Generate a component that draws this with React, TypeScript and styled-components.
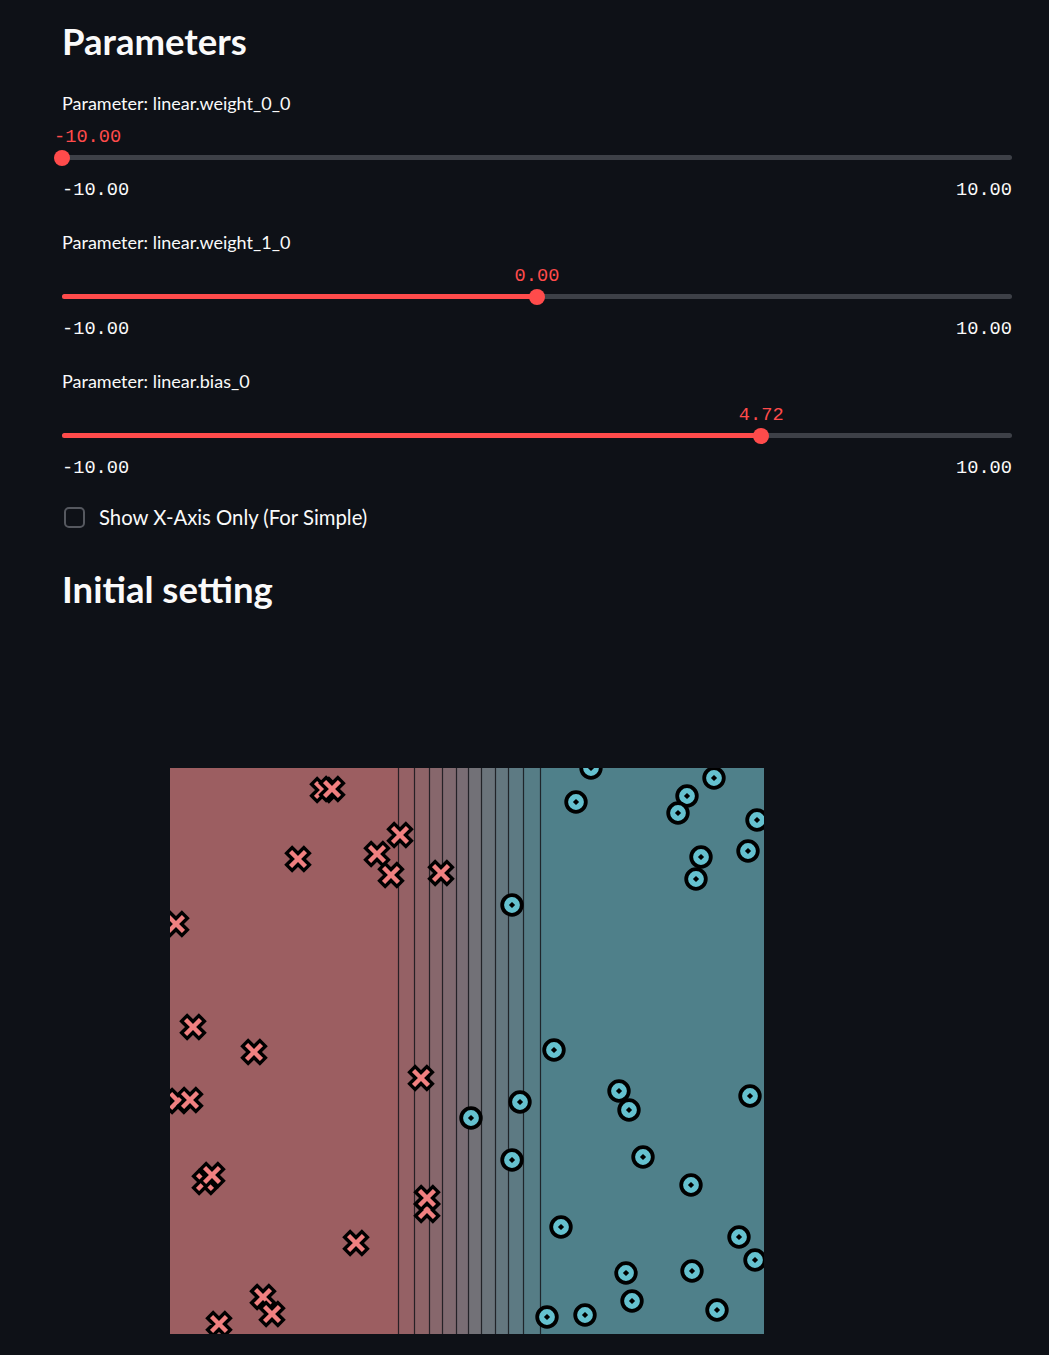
import React from "react";
import styled, { createGlobalStyle } from "styled-components";

const GlobalStyle = createGlobalStyle`
  html, body {
    margin: 0;
    padding: 0;
    background: #0e1117;
  }
  body {
    font-family: Lato, "Noto Sans", sans-serif;
    color: #fafafa;
    -webkit-font-smoothing: antialiased;
  }
`;

const Page = styled.main`
  width: 950px;
  padding: 0 0 0 62px;
  display: flex;
  flex-direction: column;
`;

const Heading = styled.h2<{ $top: number }>`
  margin: ${(p) => p.$top}px 0 0;
  font-size: 36.5px;
  font-weight: 700;
  line-height: 43px;
  color: #fafafa;
`;

const SliderBlock = styled.section<{ $top: number }>`
  display: flex;
  flex-direction: column;
  margin-top: ${(p) => p.$top}px;
`;

const SliderLabel = styled.div`
  font-size: 18px;
  line-height: 24px;
  height: 24px;
  color: #fafafa;
`;

const TrackArea = styled.div`
  height: 56px;
  box-sizing: border-box;
  padding-top: 40px;
`;

const Rail = styled.div`
  position: relative;
  height: 5px;
  border-radius: 3px;
  background: #3d4047;
`;

const Fill = styled.div`
  height: 100%;
  border-radius: 3px;
  background: #ff4b4b;
`;

const Thumb = styled.div`
  position: absolute;
  top: 50%;
  width: 16px;
  height: 16px;
  margin: -8px 0 0 -8px;
  border-radius: 50%;
  background: #ff4b4b;
`;

const Mono = styled.div`
  font-family: "Liberation Mono", "DejaVu Sans Mono", monospace;
  font-size: 18.67px;
  line-height: 20px;
  white-space: nowrap;
`;

const ValueLabel = styled(Mono)<{ $atMin: boolean }>`
  position: absolute;
  bottom: 13px;
  color: #ff4b4b;
  transform: ${(p) => (p.$atMin ? "translateX(-8px)" : "translateX(-50%)")};
`;

const MinMax = styled(Mono)`
  display: flex;
  justify-content: space-between;
  margin-top: 9px;
  color: #fafafa;
`;

const CheckRow = styled.label`
  display: flex;
  align-items: center;
  gap: 14px;
  margin-top: 28px;
  height: 22px;
  font-size: 20.3px;
  line-height: 22px;
  color: #fafafa;
`;

const Box = styled.span`
  display: block;
  width: 21px;
  height: 21px;
  margin-left: 2px;
  box-sizing: border-box;
  border: 2px solid #55585f;
  border-radius: 5px;
`;

const Chart = styled.svg`
  display: block;
  margin-top: 29px;
  overflow: visible;
`;

type SliderProps = { name: string; value: number; min: number; max: number };

function Slider({ name, value, min, max, top }: SliderProps & { top: number }) {
  const pct = ((value - min) / (max - min)) * 100;
  return (
    <SliderBlock $top={top}>
      <SliderLabel>Parameter: {name}</SliderLabel>
      <TrackArea>
        <Rail>
          <Fill style={{ width: `${pct}%` }} />
          <Thumb style={{ left: `${pct}%` }} />
          <ValueLabel $atMin={pct === 0} style={{ left: `${pct}%` }}>
            {value.toFixed(2)}
          </ValueLabel>
        </Rail>
      </TrackArea>
      <MinMax>
        <span>{min.toFixed(2)}</span>
        <span>{max.toFixed(2)}</span>
      </MinMax>
    </SliderBlock>
  );
}

const AX = { x0: 170, x1: 764, y0: 768, y1: 1334 };
const LINES = [398, 414, 429, 442, 456, 468, 481, 495, 508, 523, 540];
const RED = [156, 94, 97];
const TEAL = [79, 128, 138];

function mix(t: number) {
  const c = RED.map((r, i) => Math.round(r + (TEAL[i] - r) * t));
  return `rgb(${c[0]},${c[1]},${c[2]})`;
}

const CROSSES: [number, number][] = [
  [323, 790], [332, 789], [298, 859], [400, 835], [377, 854], [391, 875],
  [441, 873], [176, 924], [193, 1027], [254, 1052], [178, 1101], [190, 1100],
  [421, 1078], [205, 1182], [212, 1175], [427, 1210], [427, 1198], [356, 1243],
  [263, 1297], [272, 1314], [219, 1324],
];

const CIRCLES: [number, number][] = [
  [591, 768], [576, 802], [714, 778], [687, 796], [678, 813], [757, 820],
  [701, 857], [748, 851], [696, 879], [512, 905], [554, 1050], [520, 1102],
  [471, 1118], [619, 1091], [629, 1110], [750, 1096], [512, 1160], [643, 1157],
  [691, 1185], [561, 1227], [739, 1237], [755, 1260], [626, 1273], [692, 1271],
  [632, 1301], [717, 1310], [547, 1317], [585, 1315],
];

const L = 12.2;
const H = 3.9;
const CROSS_PTS = [
  [-H, -L], [H, -L], [H, -H], [L, -H], [L, H], [H, H],
  [H, L], [-H, L], [-H, H], [-L, H], [-L, -H], [-H, -H],
]
  .map(([x, y]) => `${x},${y}`)
  .join(" ");

function DecisionChart() {
  const edges = [AX.x0, ...LINES, AX.x1];
  const bands = edges.slice(0, -1).map((x, i) => ({
    x,
    w: edges[i + 1] - x,
    fill: mix(i / (edges.length - 2)),
  }));
  return (
    <Chart width={950} height={715} viewBox="62 640 950 715">
      <defs>
        <clipPath id="axes-clip">
          <rect x={AX.x0} y={AX.y0} width={AX.x1 - AX.x0} height={AX.y1 - AX.y0} />
        </clipPath>
      </defs>
      <g clipPath="url(#axes-clip)">
        {bands.map((b) => (
          <rect key={b.x} x={b.x} y={AX.y0} width={b.w} height={AX.y1 - AX.y0} fill={b.fill} />
        ))}
        {LINES.map((x) => (
          <line
            key={x}
            x1={x + 0.5}
            x2={x + 0.5}
            y1={AX.y0}
            y2={AX.y1}
            stroke="#15151a"
            strokeOpacity={0.85}
            strokeWidth={1.2}
          />
        ))}
        {CROSSES.map(([x, y], i) => (
          <polygon
            key={`x${i}`}
            points={CROSS_PTS}
            transform={`translate(${x} ${y}) rotate(45)`}
            fill="#f08080"
            stroke="#000"
            strokeWidth={3.4}
            strokeLinejoin="miter"
          />
        ))}
        {CIRCLES.map(([x, y], i) => (
          <g key={`o${i}`} transform={`translate(${x} ${y})`}>
            <circle r={9.8} fill="#65c1cf" stroke="#000" strokeWidth={3.8} />
            <rect x={-2.2} y={-2.2} width={4.4} height={4.4} fill="#000" transform="rotate(45)" />
          </g>
        ))}
      </g>
    </Chart>
  );
}

export default function App() {
  return (
    <>
      <GlobalStyle />
      <Page>
        <Heading $top={20}>Parameters</Heading>
        <Slider top={28} name="linear.weight_0_0" value={-10} min={-10} max={10} />
        <Slider top={30} name="linear.weight_1_0" value={0} min={-10} max={10} />
        <Slider top={30} name="linear.bias_0" value={4.72} min={-10} max={10} />
        <CheckRow>
          <Box />
          Show X-Axis Only (For Simple)
        </CheckRow>
        <Heading $top={40}>Initial setting</Heading>
        <DecisionChart />
      </Page>
    </>
  );
}
